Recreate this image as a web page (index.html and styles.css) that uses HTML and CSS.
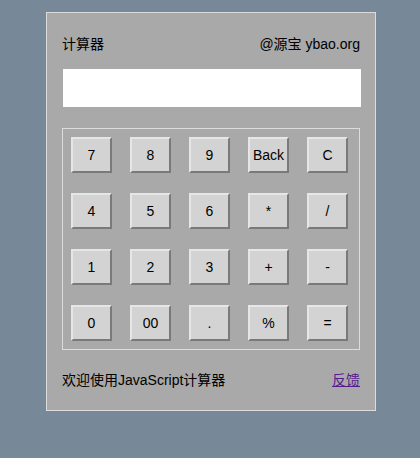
FILE: index.html
```html
<!DOCTYPE html>
<html>
<head>
<meta charset="utf-8">
<link rel="stylesheet" href="styles.css">
</head>
<body>
<div class="panel">
  <div class="header">
    <span>计算器</span>
    <span>@源宝 ybao.org</span>
  </div>
  <div class="display"></div>
  <div class="keys">
    <div class="key">7</div>
    <div class="key">8</div>
    <div class="key">9</div>
    <div class="key">Back</div>
    <div class="key">C</div>
    <div class="key">4</div>
    <div class="key">5</div>
    <div class="key">6</div>
    <div class="key">*</div>
    <div class="key">/</div>
    <div class="key">1</div>
    <div class="key">2</div>
    <div class="key">3</div>
    <div class="key">+</div>
    <div class="key">-</div>
    <div class="key">0</div>
    <div class="key">00</div>
    <div class="key">.</div>
    <div class="key">%</div>
    <div class="key">=</div>
  </div>
  <div class="footer">
    <span>欢迎使用JavaScript计算器</span>
    <a class="feedback" href="#">反馈</a>
  </div>
</div>
</body>
</html>
```
FILE: styles.css
```css
html, body {
  margin: 0;
  padding: 0;
  background: #778899;
}
body {
  font-family: "Liberation Sans", "Noto Sans CJK SC", Arial, sans-serif;
  font-size: 14px;
  color: #000;
}
.panel {
  box-sizing: border-box;
  margin: 12px 0 0 46px;
  width: 330px;
  height: 399px;
  border: 1px solid #dcdcdc;
  background: #a9a9a9;
  padding: 22px 15px 0 15px;
}
.header {
  display: flex;
  justify-content: space-between;
  line-height: 18px;
  height: 18px;
}
.display {
  margin-top: 16px;
  margin-left: 1px;
  width: 298px;
  height: 38px;
  background: #fff;
}
.keys {
  box-sizing: border-box;
  margin-top: 21px;
  width: 298px;
  height: 222px;
  border: 1px solid #dcdcdc;
  padding: 8px;
  display: grid;
  grid-template-columns: repeat(5, 41px);
  grid-auto-rows: 36px;
  column-gap: 18px;
  row-gap: 20px;
}
.key {
  box-sizing: border-box;
  background: #d3d3d3;
  border: 2px solid;
  border-color: #e6e6e6 #7a7a7a #7a7a7a #e6e6e6;
  display: flex;
  align-items: center;
  justify-content: center;
  font-size: 14px;
}
.footer {
  margin-top: 21px;
  display: flex;
  justify-content: space-between;
  line-height: 18px;
}
.feedback {
  color: #551a8b;
  text-decoration: underline;
}
```
